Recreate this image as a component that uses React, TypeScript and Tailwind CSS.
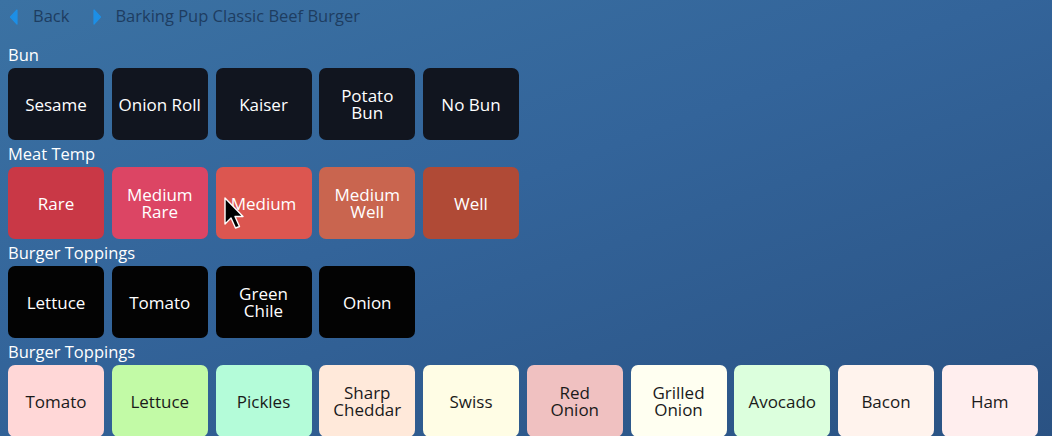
import React from "react";

type Opt = { label: string; bg: string; fg: string };

const light = "text-[#1a1a1a]";

const sections: { title: string; options: Opt[] }[] = [
  {
    title: "Bun",
    options: [
      { label: "Sesame", bg: "bg-[#11151f]", fg: "text-white" },
      { label: "Onion Roll", bg: "bg-[#11151f]", fg: "text-white" },
      { label: "Kaiser", bg: "bg-[#11151f]", fg: "text-white" },
      { label: "Potato\nBun", bg: "bg-[#11151f]", fg: "text-white" },
      { label: "No Bun", bg: "bg-[#11151f]", fg: "text-white" },
    ],
  },
  {
    title: "Meat Temp",
    options: [
      { label: "Rare", bg: "bg-[#c93846]", fg: "text-white" },
      { label: "Medium\nRare", bg: "bg-[#dc4564]", fg: "text-white" },
      { label: "Medium", bg: "bg-[#dc5650]", fg: "text-white" },
      { label: "Medium\nWell", bg: "bg-[#c9654f]", fg: "text-white" },
      { label: "Well", bg: "bg-[#b04a36]", fg: "text-white" },
    ],
  },
  {
    title: "Burger Toppings",
    options: [
      { label: "Lettuce", bg: "bg-[#030303]", fg: "text-white" },
      { label: "Tomato", bg: "bg-[#030303]", fg: "text-white" },
      { label: "Green\nChile", bg: "bg-[#030303]", fg: "text-white" },
      { label: "Onion", bg: "bg-[#030303]", fg: "text-white" },
    ],
  },
  {
    title: "Burger Toppings",
    options: [
      { label: "Tomato", bg: "bg-[#ffd7d7]", fg: light },
      { label: "Lettuce", bg: "bg-[#c2faa6]", fg: light },
      { label: "Pickles", bg: "bg-[#b4fcd9]", fg: light },
      { label: "Sharp\nCheddar", bg: "bg-[#ffe9da]", fg: light },
      { label: "Swiss", bg: "bg-[#fffde5]", fg: light },
      { label: "Red\nOnion", bg: "bg-[#f0c1c1]", fg: light },
      { label: "Grilled\nOnion", bg: "bg-[#fffff1]", fg: light },
      { label: "Avocado", bg: "bg-[#dcffdd]", fg: light },
      { label: "Bacon", bg: "bg-[#fff3ed]", fg: light },
      { label: "Ham", bg: "bg-[#ffeeee]", fg: light },
    ],
  },
];

function Tri({ dir }: { dir: "left" | "right" }) {
  return (
    <svg width="9" height="16" viewBox="0 0 9 16" className="shrink-0">
      {dir === "left" ? (
        <path d="M8 1 L1.5 8 L8 15 Z" fill="#1d8fe6" stroke="#1d8fe6" strokeWidth="1.2" strokeLinejoin="round" />
      ) : (
        <path d="M1 1 L7.5 8 L1 15 Z" fill="#1d8fe6" stroke="#1d8fe6" strokeWidth="1.2" strokeLinejoin="round" />
      )}
    </svg>
  );
}

function Cursor() {
  return (
    <svg
      width="22"
      height="34"
      viewBox="0 0 22 34"
      className="absolute left-[224px] top-[197px] pointer-events-none"
    >
      <path
        d="M1 1 L1 27 L7 21 L11.5 31 L15.5 29.5 L11 19.5 L19 19.5 Z"
        fill="#000"
        stroke="#fff"
        strokeWidth="1.4"
        strokeLinejoin="round"
      />
    </svg>
  );
}

export default function App() {
  return (
    <div
      className="relative w-[1052px] h-[436px] overflow-hidden bg-[linear-gradient(160deg,#3b72a3_0%,#33649a_45%,#2a5283_100%)]"
      style={{ fontFamily: '"Open Sans", "Noto Sans", sans-serif' }}
    >
      {/* header */}
      <div className="flex items-center h-[33px] pl-[9px] text-[16.5px] text-[#1e3d61]">
        <Tri dir="left" />
        <span className="ml-[15px]">Back</span>
        <span className="ml-[24px]"><Tri dir="right" /></span>
        <span className="ml-[13px]">Barking Pup Classic Beef Burger</span>
      </div>

      <div className="flex flex-col gap-[3px] pt-[11px]">
        {sections.map((s, i) => (
          <div key={i} className="flex flex-col">
            <div className="h-[24px] px-[8px] text-[16.5px] leading-[22px] text-white">{s.title}</div>
            <div className="flex gap-[7.75px] px-[8px]">
              {s.options.map((o, j) => (
                <button
                  key={j}
                  className={`w-[96px] h-[72px] shrink-0 rounded-[7px] flex items-center justify-center text-center text-[17px] leading-[17px] whitespace-pre-line ${o.bg} ${o.fg}`}
                >
                  {o.label}
                </button>
              ))}
            </div>
          </div>
        ))}
      </div>

      <Cursor />
    </div>
  );
}
